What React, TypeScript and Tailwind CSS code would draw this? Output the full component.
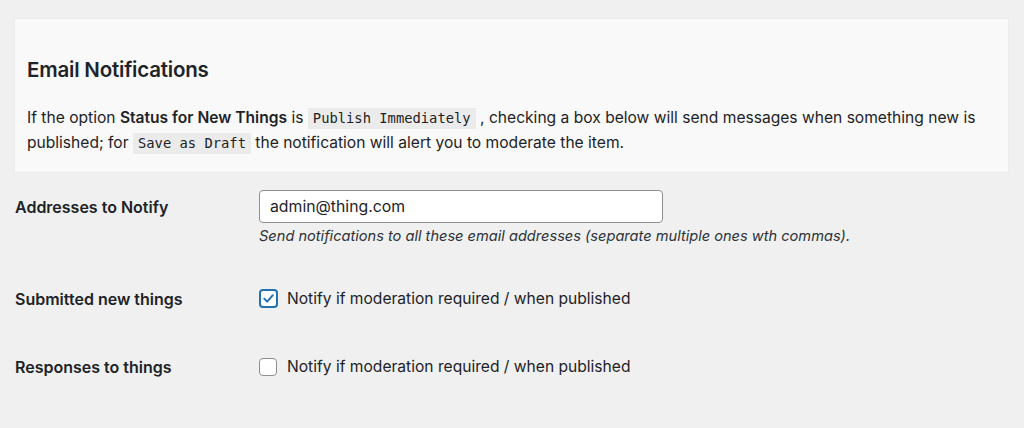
import React from "react";

export default function App() {
  return (
    <div className="w-[1024px] h-[428px] overflow-hidden bg-[#f0f0f1] text-[#1d2327] font-['Inter',sans-serif] pt-[18px] pl-[14px] pr-[15px]">
      <div className="bg-[#f9f9f9] border border-[#ececec] h-[155px] px-[12px] pt-[38px]">
        <h2 className="text-[20.5px] leading-[26px] font-semibold tracking-[-0.2px]">Email Notifications</h2>
        <p className="mt-[22px] text-[15.6px] leading-[25px]">
          If the option <strong className="font-semibold">Status for New Things</strong> is{" "}
          <code className="inline-block font-['DejaVu_Sans_Mono',monospace] text-[13.8px] leading-[21px] bg-[#ebebeb] px-[5px] align-baseline">Publish Immediately</code>
          {" "}, checking a box below will send messages when something new is published; for{" "}
          <code className="inline-block font-['DejaVu_Sans_Mono',monospace] text-[13.8px] leading-[21px] bg-[#ebebeb] px-[5px] align-baseline">Save as Draft</code>{" "}
          the notification will alert you to moderate the item.
        </p>
      </div>

      <div className="pl-[1px]">
        <div className="flex mt-[17px]">
          <div className="w-[244px] h-[33px] flex items-center text-[16px] font-semibold">Addresses to Notify</div>
          <div>
            <input
              type="text"
              defaultValue="admin@thing.com"
              className="w-[404px] h-[33px] border border-[#8c8f94] rounded-[4px] bg-white px-[10px] text-[15.8px] text-[#1d2327] outline-none font-['Inter',sans-serif]"
            />
            <div className="mt-[3px] text-[14.6px] leading-[20px] italic text-[#2c3338]">
              Send notifications to all these email addresses (separate multiple ones wth commas).
            </div>
          </div>
        </div>

        <div className="flex mt-[43px] items-center h-[19px]">
          <div className="w-[244px] text-[16px] font-semibold">Submitted new things</div>
          <label className="flex items-center gap-[9px] text-[15.6px]">
            <span className="w-[19px] h-[19px] rounded-[4px] border-2 border-[#2271b1] bg-white flex items-center justify-center">
              <svg width="17" height="17" viewBox="0 0 20 20">
                <path d="M4.3 10.2 L8.2 14.2 L15.8 5.6" fill="none" stroke="#2271b1" strokeWidth="2.6" strokeLinecap="round" strokeLinejoin="round" />
              </svg>
            </span>
            Notify if moderation required / when published
          </label>
        </div>

        <div className="flex mt-[49px] items-center h-[19px]">
          <div className="w-[244px] text-[16px] font-semibold">Responses to things</div>
          <label className="flex items-center gap-[10px] text-[15.6px]">
            <span className="w-[18px] h-[18px] rounded-[4px] border border-[#8c8f94] bg-white"></span>
            Notify if moderation required / when published
          </label>
        </div>
      </div>
    </div>
  );
}
